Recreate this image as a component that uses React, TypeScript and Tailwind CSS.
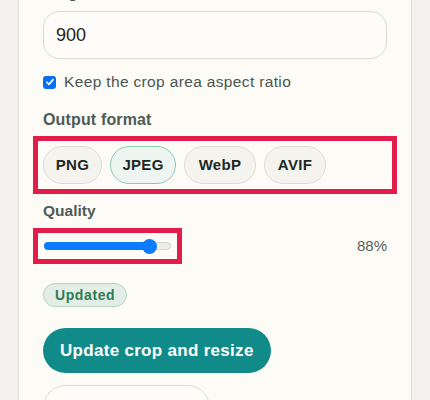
import React from "react";

const font = { fontFamily: '"Liberation Sans", Arial, sans-serif' };

export default function App() {
  const formats = [
    { name: "PNG", w: "w-[59px]" },
    { name: "JPEG", w: "w-[66px]" },
    { name: "WebP", w: "w-[72px]" },
    { name: "AVIF", w: "w-[62px]" },
  ];
  const selected = "JPEG";
  const quality = 88;
  return (
    <div className="w-[430px] h-[400px] overflow-hidden bg-[#f2f1ed]" style={font}>
      <div className="ml-[18px] w-[394px] h-[400px] border-x border-[#e2dfd7] bg-[#fcfbf6] px-6 flex flex-col">
        <div className="-mt-[17px] flex flex-col">
          <label className="h-5 leading-5 text-[16px] font-semibold text-[#4f5a55]">Height</label>
          <div className="mt-2 h-12 rounded-2xl border border-[#dcdad2] bg-[#fdfcf8] px-3 flex items-center text-[18px] text-[#1d2421]">
            900
          </div>
          <div className="mt-[13px] h-5 flex items-center gap-2">
            <span className="w-[13px] h-[13px] rounded-[3px] bg-[#0b6df5] flex items-center justify-center">
              <svg viewBox="0 0 12 12" className="w-[10px] h-[10px]">
                <path d="M2.3 6.3 L4.8 8.8 L9.7 3.2" fill="none" stroke="white" strokeWidth="2" strokeLinecap="round" strokeLinejoin="round" />
              </svg>
            </span>
            <span className="text-[15.5px] text-[#4b5551] tracking-[0.35px]">Keep the crop area aspect ratio</span>
          </div>
          <div className="mt-[18px] h-5 leading-5 text-[16px] font-semibold text-[#4f5a55] tracking-[0.15px]">Output format</div>
          <div className="mt-4 flex gap-2 outline-[5px] outline-solid outline-offset-[5px] outline-[#e31c4b]">
            {formats.map((f) => (
              <div
                key={f.name}
                className={
                  f.name === selected
                    ? `${f.w} h-[38px] rounded-full border border-[#8cc8bc] bg-[#eef5f0] flex items-center justify-center text-[15px] font-bold text-[#1d2824] tracking-[0.3px]`
                    : `${f.w} h-[38px] rounded-full border border-[#dddbd3] bg-[#f4f3ee] flex items-center justify-center text-[15px] font-bold text-[#1d2824] tracking-[0.3px]`
                }
              >
                {f.name}
              </div>
            ))}
          </div>
          <div className="mt-[17px] h-5 leading-5 text-[15.5px] font-semibold text-[#4f5a55]">Quality</div>
          <div className="mt-[17px] h-4 flex items-center justify-between">
            <div className="relative w-[129px] h-4 outline-[5px] outline-solid outline-offset-[5px] outline-[#e31c4b]">
              <div className="absolute left-[1px] right-[1px] top-1 h-2 rounded-full border border-[#d6d6d0] bg-[#ececE8]" />
              <div className="absolute left-[1px] top-1 h-2 w-[106px] rounded-full bg-[#0b7bff]" />
              <div className="absolute left-[99px] top-[0.5px] w-[15px] h-[15px] rounded-full bg-[#0b7bff]" />
            </div>
            <span className="text-[15px] leading-4 text-[#56605c]">{quality}%</span>
          </div>
          <div className="mt-[29px] flex">
            <span className="h-6 px-[11px] rounded-full border border-[#b7d4c1] bg-[#e2eee5] flex items-center text-[14px] font-bold text-[#2e7b53] tracking-[0.6px]">
              Updated
            </span>
          </div>
          <div className="mt-[21px] flex">
            <button className="h-[45px] px-[17px] rounded-full bg-[#118a8a] text-white text-[17px] font-bold tracking-[0.3px]">
              Update crop and resize
            </button>
          </div>
          <div className="mt-3 flex">
            <div className="h-[45px] w-[167px] rounded-full border border-[#dcdad2] bg-[#fdfcf8]" />
          </div>
        </div>
      </div>
    </div>
  );
}
